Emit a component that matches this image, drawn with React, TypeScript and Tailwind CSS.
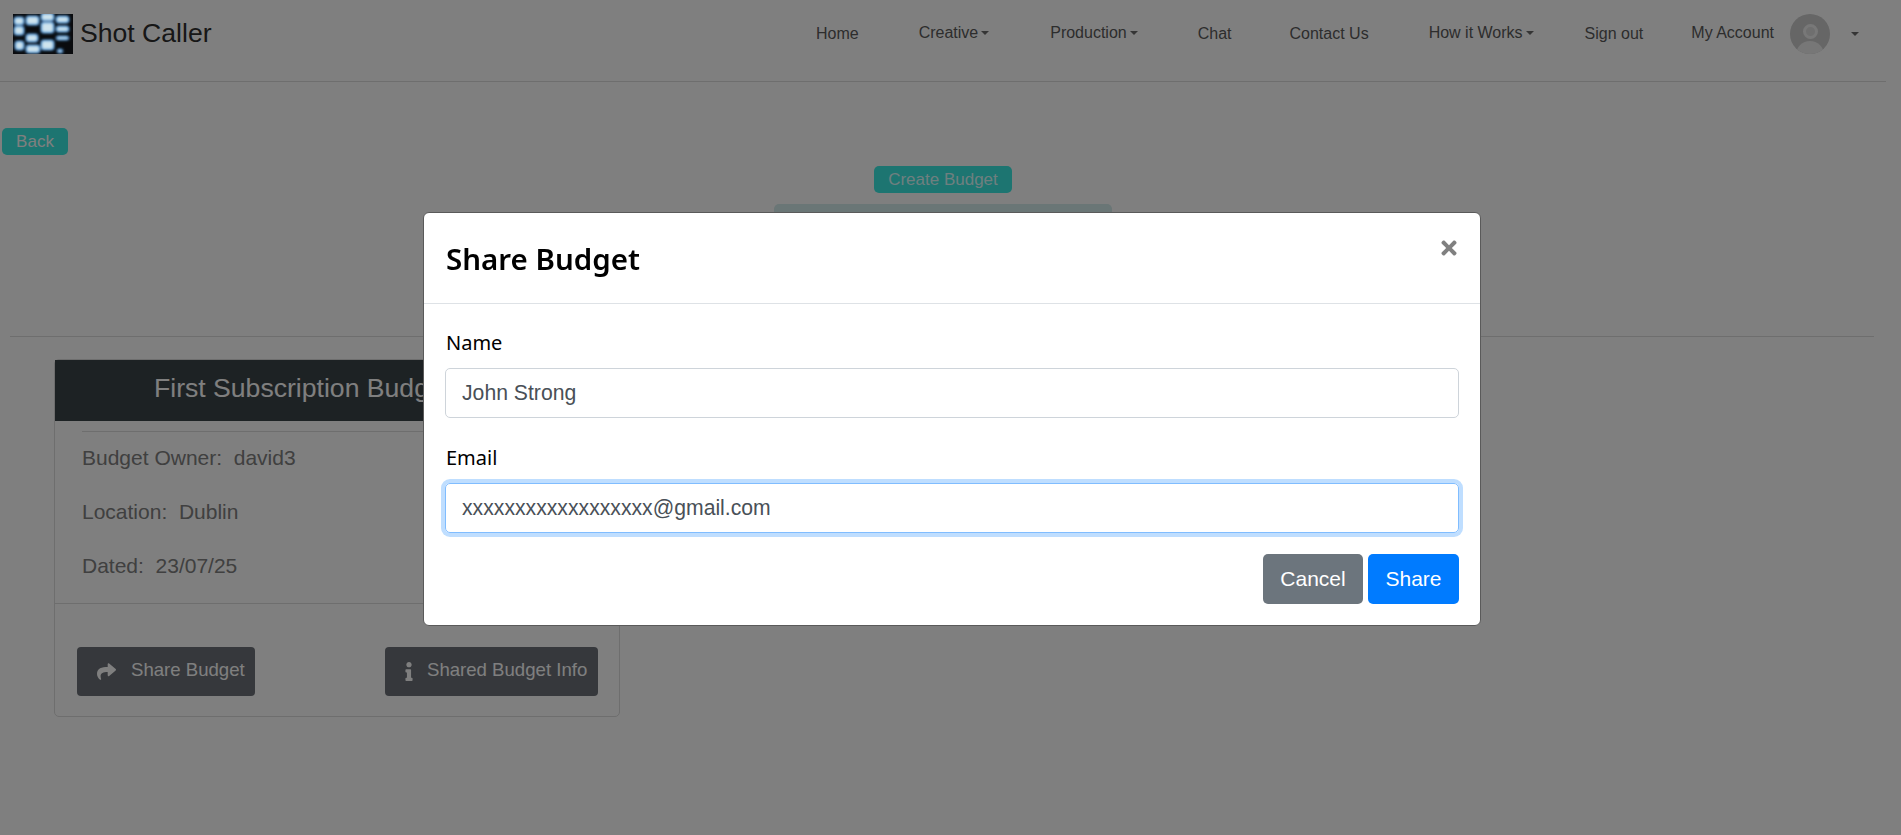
import { FaInfo, FaShare, FaTimes } from 'react-icons/fa';

const arial = "font-['Liberation_Sans',Arial,sans-serif]";
const segoe = "font-['Noto_Sans',sans-serif]";

function Caret() {
  return <span className="ml-[3px] inline-block border-x-[4px] border-t-[4px] border-x-transparent border-t-[#6a6a6a] align-middle" />;
}

function Logo() {
  const blocks = [
    [1, 3, 10, 8], [1, 12, 10, 9], [2, 27, 9, 9], [13, 2, 13, 9], [13, 20, 12, 8], [13, 31, 14, 8],
    [28, -1, 13, 8], [28, 8, 13, 11], [28, 26, 13, 10], [43, 2, 13, 7], [43, 12, 13, 6], [43, 22, 13, 4], [44, 35, 6, 4],
  ];
  return (
    <svg width="60" height="40" viewBox="0 0 60 40" className="relative z-20 bg-[#0a0b0e]">
      <defs>
        <filter id="glow">
          <feGaussianBlur stdDeviation="1.6" />
        </filter>
        <filter id="soft">
          <feGaussianBlur stdDeviation="1.5" />
        </filter>
      </defs>
      <g filter="url(#glow)" fill="#1872cc">
        {blocks.map(([x, y, w, h]) => (
          <rect key={`${x}-${y}`} x={x} y={y} width={w} height={h} rx="2" />
        ))}
      </g>
      <g filter="url(#soft)" fill="#cfe4ee">
        {blocks.map(([x, y, w, h]) => (
          <rect key={`${x}-${y}`} x={x + 0.5} y={y + 0.5} width={w - 1} height={h - 1} rx="2" />
        ))}
      </g>
    </svg>
  );
}

function Navbar() {
  return (
    <nav className={`flex h-[82px] items-center border-b border-[#dcdcdc] pb-[14px] text-[16px] text-[#5a5a5a] ${arial}`}>
      <div className="ml-[13px] flex items-center">
        <Logo />
        <span className="ml-[7px] text-[26.6px] text-[#2e2e2e]">Shot Caller</span>
      </div>
      <div className="ml-auto flex items-center pr-[27px]">
        <a>Home</a>
        <a className="ml-[60px] -translate-y-px">Creative<Caret /></a>
        <a className="ml-[61px] -translate-y-px">Production<Caret /></a>
        <a className="ml-[60px]">Chat</a>
        <a className="ml-[58px]">Contact Us</a>
        <a className="ml-[60px] -translate-y-px">How it Works<Caret /></a>
        <a className="ml-[51px]">Sign out</a>
        <a className="ml-[48px] -translate-y-px">My Account</a>
        <div className="relative ml-[16px] h-10 w-10 overflow-hidden rounded-full bg-[#cccccc]">
          <div className="absolute left-[13px] top-[10px] h-[15px] w-[15px] rounded-full border-[3px] border-[#f0f0f0] bg-[#dedede]" />
          <div className="absolute left-[6px] top-[27px] h-[28px] w-[28px] rounded-full bg-[#eeeeee]" />
        </div>
        <span className="ml-[18px]"><Caret /></span>
      </div>
    </nav>
  );
}

function BudgetCard() {
  return (
    <section className={`ml-[54px] mt-[22px] h-[358px] w-[566px] rounded-[5px] border border-[#dcdcdc] ${arial}`}>
      <div className="flex h-[61px] items-center bg-[#3a4448] pb-[4px] pl-[99px] text-[26.6px] text-white">First Subscription Budget</div>
      <div className="mx-[27px] mt-[10px] border-t border-[#dcdcdc]" />
      <div className="flex flex-col gap-[34px] px-[27px] pt-[16px] text-[21px] leading-[20px] text-[#808080]">
        <p className="whitespace-pre">Budget Owner:  david3</p>
        <p className="whitespace-pre">Location:  Dublin</p>
        <p className="whitespace-pre">Dated:  23/07/25</p>
      </div>
      <div className="mt-[27px] border-t border-[#dcdcdc]" />
      <div className="flex justify-between pl-[22px] pr-[21px] pt-[43px] text-[18.6px] text-white">
        <button className="flex h-[49px] w-[178px] items-center rounded-[4px] bg-[#6c7078] pl-[20px]">
          <FaShare size={19} className="mr-[15px] text-white" />
          <span className="mb-[4px]">Share Budget</span>
        </button>
        <button className="flex h-[49px] w-[213px] items-center rounded-[4px] bg-[#6c7078] pl-[20px]">
          <FaInfo size={19} className="mr-[14px] w-[8px] text-white" />
          <span className="mb-[4px]">Shared Budget Info</span>
        </button>
      </div>
    </section>
  );
}

function ShareModal() {
  return (
    <div className="fixed inset-0 z-30 flex justify-center pl-[3px] pt-[212px]">
      <div className="h-[414px] w-[1058px] rounded-[6px] border border-[#5a5a5a] bg-white">
        <div className="relative h-[91px] border-b border-[#dee2e6] pl-[22px] pt-[24px]">
          <h5 className={`text-[29.5px] font-semibold leading-[44px] text-black ${segoe}`}>Share Budget</h5>
          <FaTimes size={22} className="absolute right-[20px] top-[24px] text-[#808080]" />
        </div>
        <form className="pl-[21px] pr-[21px] pt-[24px]">
          <label className={`ml-px block h-[30px] text-[20px] leading-[30px] text-black ${segoe}`}>Name</label>
          <input readOnly value="John Strong" className={`mt-[10px] block h-[50px] w-full rounded-[5px] border border-[#ced4da] px-[16px] text-[21.2px] text-[#495057] outline-none ${arial}`} />
          <label className={`ml-px mt-[25px] block h-[30px] text-[20px] leading-[30px] text-black ${segoe}`}>Email</label>
          <input readOnly value="xxxxxxxxxxxxxxxxxx@gmail.com" className={`mt-[10px] block h-[50px] w-full rounded-[5px] border border-[#80bdff] px-[16px] text-[21.2px] text-[#495057] shadow-[0_0_0_4px_#bfdeff] outline-none ${arial}`} />
          <div className={`mt-[21px] flex justify-end gap-[5px] text-[21px] text-white ${arial}`}>
            <button type="button" className="h-[50px] w-[100px] rounded-[5px] bg-[#6c757d]">Cancel</button>
            <button type="button" className="h-[50px] w-[91px] rounded-[5px] bg-[#007bff]">Share</button>
          </div>
        </form>
      </div>
    </div>
  );
}

export default function App() {
  return (
    <div className="relative h-[835px] overflow-hidden bg-white">
      <div className="w-[1886px]">
        <Navbar />
        <button className={`ml-[2px] mt-[46px] block h-[27px] w-[66px] rounded-[5px] bg-[#3aeae2] text-[17px] text-white ${arial}`}>Back</button>
        <div className="mt-[11px] flex flex-col items-center">
          <button className={`h-[27px] w-[138px] rounded-[5px] bg-[#3aeae2] text-[17px] text-[#deffff] ${arial}`}>Create Budget</button>
          <div className="mt-[11px] h-[40px] w-[338px] rounded-[5px] bg-[#d4ecec]" />
        </div>
        <div className="ml-[10px] mr-[12px] mt-[92px] border-t border-[#dcdcdc]" />
        <BudgetCard />
      </div>
      <div className="fixed inset-0 z-10 bg-black/50" />
      <ShareModal />
    </div>
  );
}
